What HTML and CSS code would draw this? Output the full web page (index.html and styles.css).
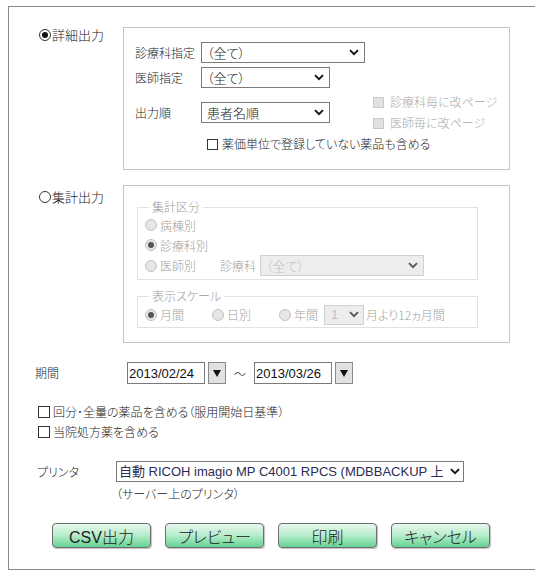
FILE: index.html
```html
<!DOCTYPE html>
<html lang="ja">
  <head>
    <meta charset="UTF-8" />
    <title>出力設定</title>
    <link rel="stylesheet" href="styles.css">
  </head>
  <body>
    <div class="panel">
      <!-- 詳細出力 -->
      <div class="option">
        <label class="option-label"><input type="radio" class="radio" name="mode" checked>詳細出力</label>
        <div class="box detail">
          <div class="field">
            <span class="field-label">診療科指定</span>
            <select class="sel sel-wide"><option>（全て）</option></select>
          </div>
          <div class="field field-2">
            <span class="field-label">医師指定</span>
            <select class="sel sel-mid"><option>（全て）</option></select>
          </div>
          <div class="field field-3">
            <span class="field-label">出力順</span>
            <select class="sel sel-mid"><option>患者名順</option></select>
            <div class="page-breaks">
              <label class="check-item is-disabled"><input type="checkbox" class="check" disabled>診療科毎に改ページ</label>
              <label class="check-item is-disabled"><input type="checkbox" class="check" disabled>医師毎に改ページ</label>
            </div>
          </div>
          <label class="check-item unit-check"><input type="checkbox" class="check">薬価単位で登録していない薬品も含める</label>
        </div>
      </div>

      <!-- 集計出力 -->
      <div class="option">
        <label class="option-label lower"><input type="radio" class="radio" name="mode">集計出力</label>
        <div class="box summary">
          <fieldset class="group group-kind" disabled>
            <legend>集計区分</legend>
            <label class="choice"><input type="radio" class="radio" name="kind" disabled>病棟別</label>
            <label class="choice"><input type="radio" class="radio" name="kind" checked disabled>診療科別</label>
            <div class="choice-row">
              <label class="choice"><input type="radio" class="radio" name="kind" disabled>医師別</label>
              <span class="inline-label">診療科</span>
              <select class="sel sel-wide sel-off" disabled><option>（全て）</option></select>
            </div>
          </fieldset>
          <fieldset class="group group-scale" disabled>
            <legend>表示スケール</legend>
            <div class="choice-row">
              <label class="choice spaced"><input type="radio" class="radio" name="scale" checked disabled>月間</label>
              <label class="choice spaced"><input type="radio" class="radio" name="scale" disabled>日別</label>
              <label class="choice"><input type="radio" class="radio" name="scale" disabled>年間</label>
              <select class="sel sel-month sel-off" disabled><option>1</option></select>
              <span class="months">月より12ヵ月間</span>
            </div>
          </fieldset>
        </div>
      </div>

      <div class="period">
        <span class="row-label">期間</span>
        <input type="text" class="date" value="2013/02/24">
        <button type="button" class="cal-btn"><svg width="8" height="8" viewBox="0 0 8 8"><polygon points="0,1 8,1 4,8" fill="#111"/></svg></button>
        <span class="tilde">～</span>
        <input type="text" class="date" value="2013/03/26">
        <button type="button" class="cal-btn"><svg width="8" height="8" viewBox="0 0 8 8"><polygon points="0,1 8,1 4,8" fill="#111"/></svg></button>
      </div>

      <div class="extras">
        <label class="check-item big"><input type="checkbox" class="check">回分･全量の薬品を含める（服用開始日基準）</label>
        <label class="check-item big"><input type="checkbox" class="check">当院処方薬を含める</label>
      </div>

      <div class="printer">
        <span class="row-label printer-label">プリンタ</span>
        <select class="sel sel-printer"><option>自動 RICOH imagio MP C4001 RPCS (MDBBACKUP 上</option></select>
      </div>
      <p class="note">（サーバー上のプリンタ）</p>

      <div class="buttons">
        <button type="button" class="btn">CSV出力</button>
        <button type="button" class="btn">プレビュー</button>
        <button type="button" class="btn">印刷</button>
        <button type="button" class="btn">キャンセル</button>
      </div>
    </div>
  </body>
</html>
```

FILE: styles.css
```css
* {
  box-sizing: border-box;
}
body {
  margin: 6px 8px;
  background: #fff;
  color: #222;
  font-family: "Noto Sans CJK JP", sans-serif;
  font-size: 12px;
  font-weight: 300;
  font-feature-settings: "palt";
}
.panel {
  width: 528px;
  height: 564px;
  border: 1px solid #8a8a8a;
  padding: 20px 0 0 26px;
}

/* radio / checkbox */
.radio {
  appearance: none;
  flex: none;
  width: 12px;
  height: 12px;
  margin: 0;
  border: 1px solid #333;
  border-radius: 50%;
  background: #fff;
  display: inline-grid;
  place-content: center;
}
.radio:checked::before {
  content: "";
  width: 6px;
  height: 6px;
  border-radius: 50%;
  background: #111;
}
.radio:disabled {
  border-color: #c2c2c2;
  background: #e6e6e6;
}
.radio:disabled:checked::before {
  background: #555;
}
.check {
  appearance: none;
  flex: none;
  width: 11px;
  height: 11px;
  margin: 0;
  border: 1px solid #333;
  background: #fff;
}
.check:disabled {
  border-color: #c8c8c8;
  background: #e2e2e2;
}

/* selects */
.sel {
  appearance: none;
  height: 21px;
  margin: 0;
  padding: 0 18px 0 5px;
  border: 1px solid #7a7a7a;
  border-radius: 0;
  color: #222;
  font: 300 13px "Noto Sans CJK JP", sans-serif;
  font-feature-settings: "palt";
  background: #fff url("data:image/svg+xml,%3Csvg xmlns='http://www.w3.org/2000/svg' width='10' height='7' viewBox='0 0 10 7'%3E%3Cpath d='M1 1.2l4 4 4-4' fill='none' stroke='%23111' stroke-width='1.9'/%3E%3C/svg%3E") no-repeat right 5px center;
}
.sel-wide {
  width: 164px;
}
.sel-mid {
  width: 129px;
}
.sel-off {
  border-color: #bdbdbd;
  background-color: #e6e6e6;
  color: #a8a8a8;
}

/* options */
.option {
  display: flex;
}
.option + .option {
  margin-top: 15px;
}
.option-label {
  width: 88px;
  height: 16px;
  padding-left: 4px;
  display: flex;
  align-items: center;
  gap: 1px;
  font-size: 13px;
  line-height: 16px;
}
.option-label.lower {
  margin-top: 4px;
}
.box {
  width: 387px;
  border: 1px solid #c4c4c4;
}
.detail {
  height: 143px;
  padding: 14px 0 0 11px;
}
.field {
  display: flex;
  align-items: center;
}
.field-label {
  width: 66px;
  line-height: 16px;
}
.field-2 {
  margin-top: 4px;
}
.field-3 {
  margin-top: 6px;
}
.page-breaks {
  margin-left: 43px;
  display: flex;
  flex-direction: column;
  gap: 5px;
}
.check-item {
  display: flex;
  align-items: center;
  gap: 6px;
  line-height: 16px;
}
.is-disabled {
  color: #a8a8a8;
}
.unit-check {
  margin: 5px 0 0 72px;
  gap: 4px;
}

/* summary */
.summary {
  height: 158px;
  padding: 0 0 0 13px;
}
.group {
  width: 341px;
  margin: 13px 0 0;
  padding: 0 0 3px 7px;
  border: 1px solid #e2e2e2;
  color: #a0a0a0;
  min-inline-size: 0;
}
.group legend {
  margin-left: 4px;
  padding: 0 3px;
  line-height: 16px;
  color: #9a9a9a;
}
.group-scale {
  margin-top: 8px;
  padding-bottom: 2px;
}
.choice {
  display: flex;
  align-items: center;
  gap: 3px;
  height: 20px;
}
.choice-row {
  display: flex;
  align-items: center;
  height: 21px;
}
.spaced {
  margin-right: 28px;
}
.inline-label {
  margin: 0 4px 0 24px;
}
.sel-month {
  width: 40px;
  height: 20px;
  margin: 0 2px 0 6px;
  padding-left: 6px;
  font-family: "Liberation Sans", sans-serif;
  font-weight: 400;
  background-position: right 4px center;
}
.months {
  color: #a0a0a0;
}

/* period */
.period {
  display: flex;
  align-items: center;
  margin-top: 19px;
}
.row-label {
  width: 92px;
  line-height: 16px;
}
.date {
  width: 78px;
  height: 22px;
  margin: 0;
  padding: 0 0 0 1px;
  border: 1px solid #7a7a7a;
  color: #111;
  font: 13px "Liberation Sans", sans-serif;
}
.cal-btn {
  width: 18px;
  height: 22px;
  margin: 0 0 0 3px;
  padding: 0;
  border: 1px solid #8a8a8a;
  background: #e1e1e1;
  display: grid;
  place-content: center;
}
.tilde {
  width: 28px;
  text-align: center;
  font-size: 12px;
}

/* extras */
.extras {
  margin: 18px 0 0 3px;
}
.check-item.big {
  height: 20px;
  gap: 3px;
}
.check-item.big .check {
  width: 12px;
  height: 12px;
}

/* printer */
.printer {
  display: flex;
  align-items: center;
  margin-top: 19px;
}
.printer-label {
  width: 81px;
  padding-left: 2px;
}
.sel-printer {
  width: 348px;
  padding-left: 2px;
  font-family: "Liberation Sans", "Noto Sans CJK JP", sans-serif;
  font-weight: 400;
  color: #2b2b55;
  background-position: right 3px center;
}
.note {
  margin: 4px 0 0 81px;
  line-height: 16px;
}

/* buttons */
.buttons {
  display: flex;
  gap: 14px;
  margin: 21px 0 0 17px;
}
.btn {
  width: 99px;
  height: 25px;
  padding: 0;
  border: 1px solid #6e6e6e;
  border-radius: 4px;
  color: #222;
  font: 300 16px "Liberation Sans", "Noto Sans CJK JP", sans-serif;
  font-feature-settings: "palt";
  background: linear-gradient(#e6f8ec, #bcedcf 45%, #86dfaa 78%, #66d193);
  box-shadow: 1px 1px 1px rgba(0, 0, 0, 0.25);
}
```
